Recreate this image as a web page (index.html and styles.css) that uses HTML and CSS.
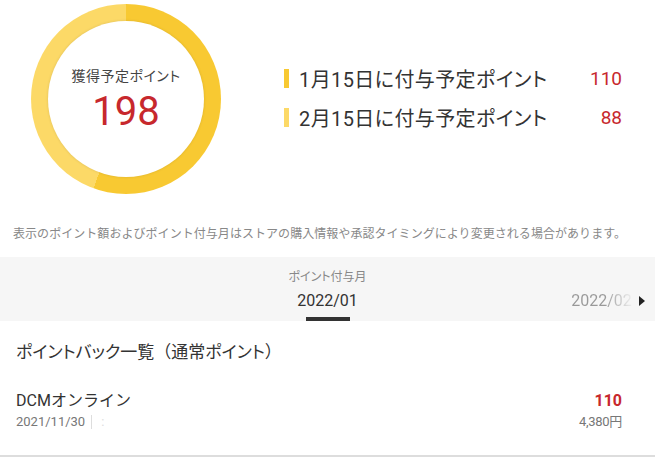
FILE: index.html
```html
<!DOCTYPE html>
<html lang="ja">
<head>
<meta charset="UTF-8">
<meta name="viewport" content="width=device-width, initial-scale=1.0">
<title>獲得予定ポイント</title>
<link rel="stylesheet" href="styles.css">
</head>
<body>

<div class="summary">
    <div class="donut">
        <div class="donut-inner">
            <p class="donut-label">獲得予定ポイント</p>
            <p class="donut-total">198</p>
        </div>
    </div>
    <ul class="legend">
        <li class="legend-row">
            <span class="legend-bar bar-jan"></span>
            <span class="legend-text">1月15日に付与予定ポイント</span>
            <span class="legend-value">110</span>
        </li>
        <li class="legend-row">
            <span class="legend-bar bar-feb"></span>
            <span class="legend-text">2月15日に付与予定ポイント</span>
            <span class="legend-value">88</span>
        </li>
    </ul>
</div>

<p class="notice">表示のポイント額およびポイント付与月はストアの購入情報や承認タイミングにより変更される場合があります。</p>

<div class="month-bar">
    <p class="month-title">ポイント付与月</p>
    <div class="month-track">
        <div class="month-item"></div>
        <div class="month-item current">2022/01</div>
        <div class="month-item next"><span class="fade">2022/02</span></div>
    </div>
    <span class="month-arrow"></span>
</div>

<h2 class="list-title">ポイントバック一覧<span class="paren">（</span>通常ポイント<span class="paren">）</span></h2>

<div class="list">
    <div class="list-row">
        <div class="list-left">
            <p class="shop">DCMオンライン</p>
            <p class="meta"><span class="date">2021/11/30</span><span class="sep"></span><span class="dots">:</span></p>
        </div>
        <div class="list-right">
            <p class="points">110</p>
            <p class="price">4,380円</p>
        </div>
    </div>
</div>

</body>
</html>
```

FILE: styles.css
```css
body {
    margin: 0;
    padding: 0;
    background-color: #fff;
    color: #333;
    font-family: Roboto, "Noto Sans CJK JP", sans-serif;
    font-feature-settings: "palt";
}
p, h2, ul {
    margin: 0;
    padding: 0;
}

/* top summary */
.summary {
    display: flex;
    align-items: center;
    padding: 4px 33px 0 31px;
}
.donut {
    width: 190px;
    height: 190px;
    border-radius: 50%;
    background: conic-gradient(#f8c932 0deg 200deg, #fcd967 200deg 360deg);
    display: flex;
    justify-content: center;
    align-items: center;
    flex-shrink: 0;
}
.donut-inner {
    width: 156px;
    height: 156px;
    border-radius: 50%;
    background-color: #fff;
    box-shadow: 0 0 3px rgba(0, 0, 0, 0.12);
    display: flex;
    flex-direction: column;
    align-items: center;
    justify-content: center;
    padding-top: 4px;
    box-sizing: border-box;
}
.donut-label {
    font-size: 14px;
    color: #444;
    line-height: 18px;
    letter-spacing: 0.5px;
}
.donut-total {
    font-size: 40px;
    line-height: 46px;
    margin-top: 4px;
    color: #c7282d;
}
.legend {
    list-style: none;
    flex: 1;
    margin-left: 63px;
    display: flex;
    flex-direction: column;
    gap: 19px;
    margin-top: -3px;
}
.legend-row {
    display: flex;
    align-items: center;
    height: 20px;
}
.legend-bar {
    width: 5px;
    height: 19px;
    margin-right: 10px;
}
.bar-jan {
    background-color: #f8c932;
}
.bar-feb {
    background-color: #fcd967;
}
.legend-text {
    flex: 1;
    font-size: 20px;
    color: #333;
    letter-spacing: 0.4px;
}
.legend-value {
    font-size: 19px;
    color: #c7282d;
}

.notice {
    margin-top: 31px;
    padding: 0 13px;
    font-size: 12px;
    line-height: 18px;
    color: #888;
    font-feature-settings: normal;
    letter-spacing: 0.05px;
    white-space: nowrap;
}

/* month selector */
.month-bar {
    position: relative;
    margin-top: 14px;
    height: 64px;
    background-color: #f6f6f6;
    overflow: hidden;
}
.month-title {
    text-align: center;
    font-size: 12px;
    color: #888;
    padding-top: 12px;
    line-height: 17px;
}
.month-track {
    display: flex;
    justify-content: center;
    margin-top: 3px;
}
.month-item {
    flex: 0 0 274px;
    text-align: center;
    font-size: 16px;
    line-height: 24px;
    height: 32px;
    box-sizing: border-box;
}
.month-item.current {
    color: #333;
    position: relative;
}
.month-item.current::after {
    content: "";
    position: absolute;
    left: 115px;
    bottom: 0;
    width: 44px;
    height: 4px;
    background-color: #333;
}
.fade {
    background: linear-gradient(to right, #999 55%, #eee 100%);
    -webkit-background-clip: text;
    background-clip: text;
    color: transparent;
}
.month-arrow {
    position: absolute;
    right: 10px;
    top: 39px;
    width: 0;
    height: 0;
    border-top: 5px solid transparent;
    border-bottom: 5px solid transparent;
    border-left: 6px solid #222;
}

/* list */
.list-title {
    font-size: 17px;
    font-weight: normal;
    color: #333;
    padding: 19px 16px 0;
    line-height: 24px;
}
.paren {
    font-feature-settings: normal;
}
.list {
    margin-top: 26px;
    border-bottom: 2px solid #ddd;
}
.list-row {
    display: flex;
    justify-content: space-between;
    padding: 0 33px 23px 16px;
}
.shop {
    font-size: 16px;
    line-height: 22px;
    color: #333;
    font-feature-settings: normal;
}
.meta {
    display: flex;
    align-items: center;
    font-size: 13px;
    line-height: 20px;
    color: #777;
}
.sep {
    width: 1px;
    height: 14px;
    background-color: #ddd;
    margin: 0 9px 0 6px;
}
.dots {
    color: #ddd;
}
.list-right {
    text-align: right;
}
.points {
    font-size: 16px;
    line-height: 22px;
    font-weight: bold;
    color: #c7282d;
}
.price {
    font-size: 13px;
    line-height: 20px;
    color: #777;
    letter-spacing: -0.3px;
}
```
